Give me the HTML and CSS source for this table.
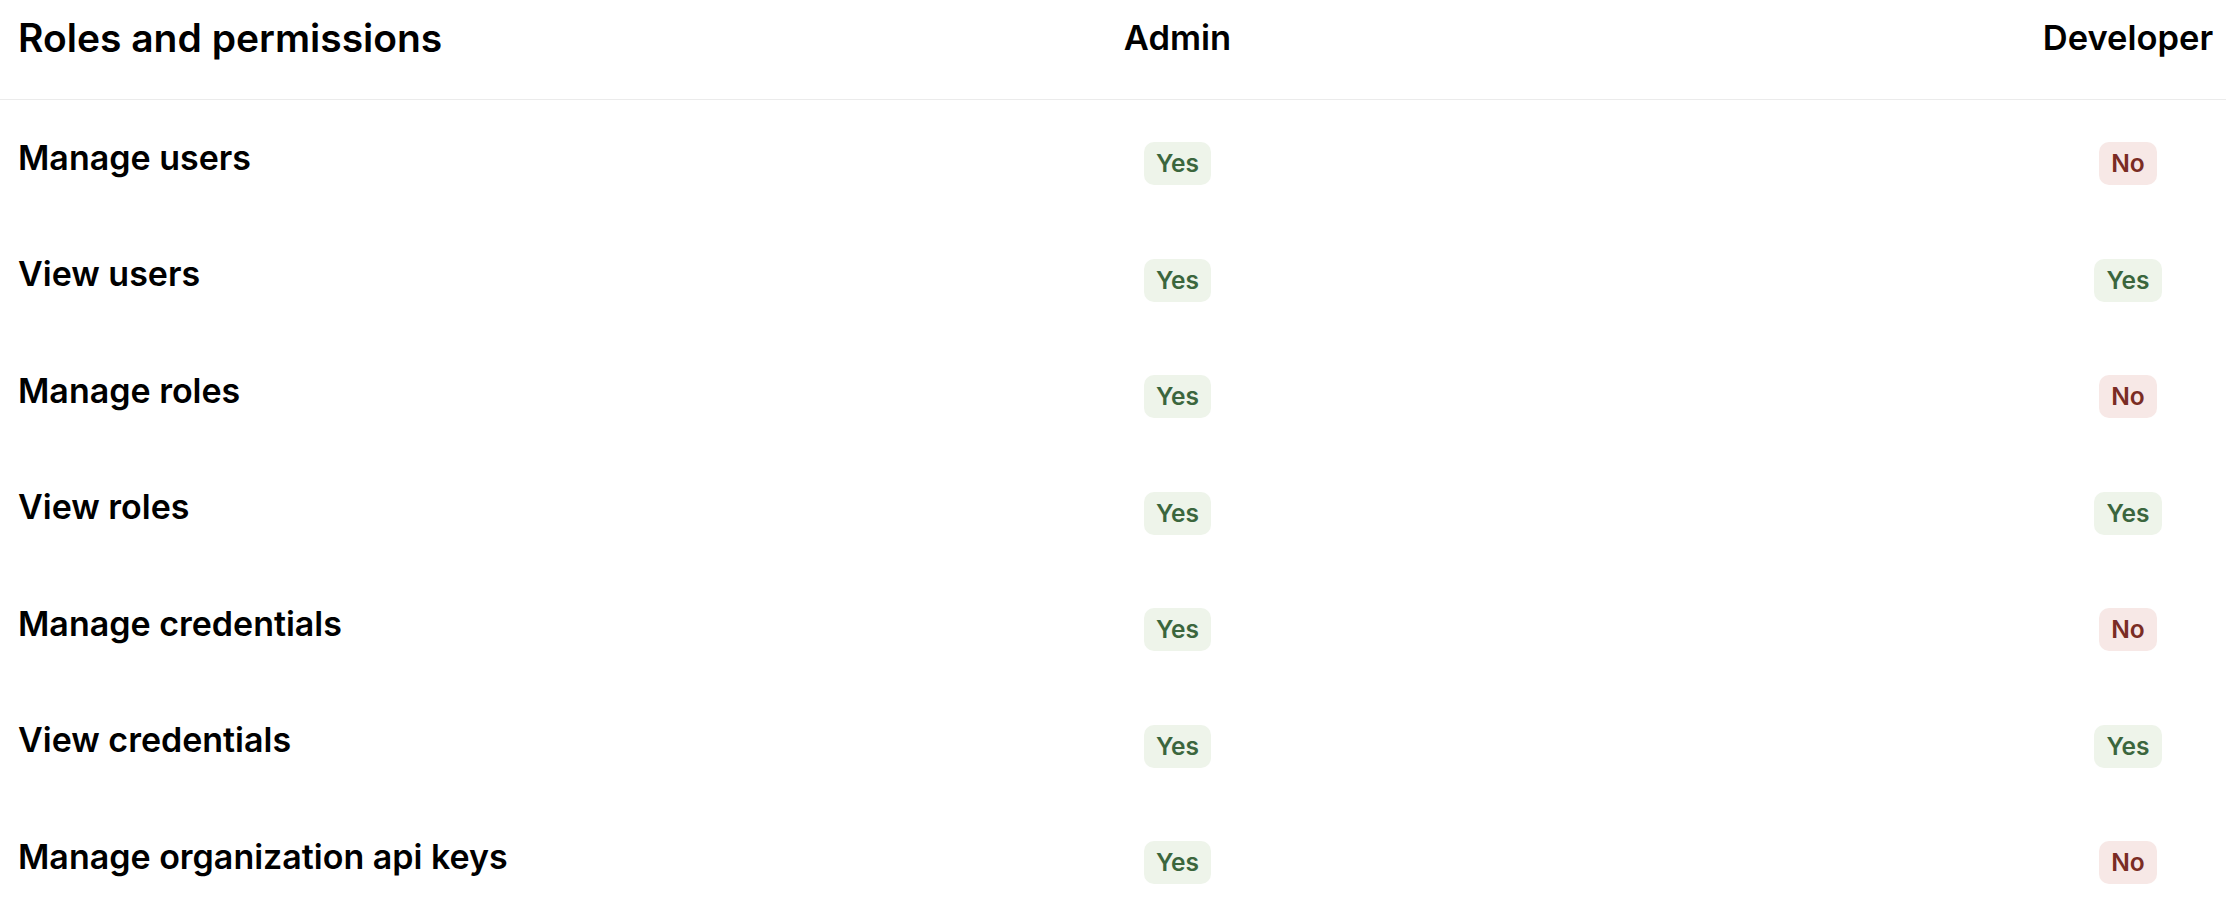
FILE: index.html
```html
<!DOCTYPE html>
<html lang="en">
<head>
<meta charset="utf-8">
<title>Roles and permissions</title>
<link rel="stylesheet" href="styles.css">
</head>
<body>
<div class="matrix">
  <div class="row head">
    <div class="cell name"><h2 class="title">Roles and permissions</h2></div>
    <div class="cell role">Admin</div>
    <div class="cell role last">Developer</div>
  </div>
  <div class="row">
    <div class="cell name">Manage users</div>
    <div class="cell val"><span class="badge yes">Yes</span></div>
    <div class="cell val last"><span class="badge no">No</span></div>
  </div>
  <div class="row">
    <div class="cell name">View users</div>
    <div class="cell val"><span class="badge yes">Yes</span></div>
    <div class="cell val last"><span class="badge yes">Yes</span></div>
  </div>
  <div class="row">
    <div class="cell name">Manage roles</div>
    <div class="cell val"><span class="badge yes">Yes</span></div>
    <div class="cell val last"><span class="badge no">No</span></div>
  </div>
  <div class="row">
    <div class="cell name">View roles</div>
    <div class="cell val"><span class="badge yes">Yes</span></div>
    <div class="cell val last"><span class="badge yes">Yes</span></div>
  </div>
  <div class="row">
    <div class="cell name">Manage credentials</div>
    <div class="cell val"><span class="badge yes">Yes</span></div>
    <div class="cell val last"><span class="badge no">No</span></div>
  </div>
  <div class="row">
    <div class="cell name">View credentials</div>
    <div class="cell val"><span class="badge yes">Yes</span></div>
    <div class="cell val last"><span class="badge yes">Yes</span></div>
  </div>
  <div class="row">
    <div class="cell name">Manage organization api keys</div>
    <div class="cell val"><span class="badge yes">Yes</span></div>
    <div class="cell val last"><span class="badge no">No</span></div>
  </div>
</div>
</body>
</html>
```
FILE: styles.css
```css
html, body {
  margin: 0;
  padding: 0;
  background: #ffffff;
}
body {
  font-family: Inter, "Noto Sans", "Liberation Sans", sans-serif;
  color: #000;
}
.matrix {
  display: flex;
  flex-direction: column;
}
.row {
  display: grid;
  grid-template-columns: 1077px 201px 1fr;
  height: 116.5px;
  align-items: center;
}
.row.head {
  height: 99px;
  align-items: start;
  border-bottom: 1px solid #ebebeb;
}
.cell {
  font-size: 34px;
  font-weight: 600;
  white-space: nowrap;
}
.cell.name {
  padding-left: 18px;
  padding-bottom: 2px;
}
.row.head .cell.name {
  padding-bottom: 0;
}
.title {
  margin: 14px 0 0;
  font-size: 39px;
  line-height: normal;
  font-weight: 600;
}
.cell.role {
  font-size: 34.5px;
  line-height: normal;
  padding-top: 17px;
}
.cell.role, .cell.val {
  text-align: center;
  display: flex;
  justify-content: center;
}
.cell.last {
  justify-self: end;
  width: 196px;
}
.cell.val {
  padding-top: 11px;
}
.badge {
  display: inline-block;
  font-size: 24.5px;
  line-height: 29px;
  font-weight: 600;
  padding: 7px 12px;
  border-radius: 10px;
}
.badge.yes {
  background: #eef4ea;
  color: #3b663d;
}
.badge.no {
  background: #f7e8e6;
  color: #7a2c24;
}
```
